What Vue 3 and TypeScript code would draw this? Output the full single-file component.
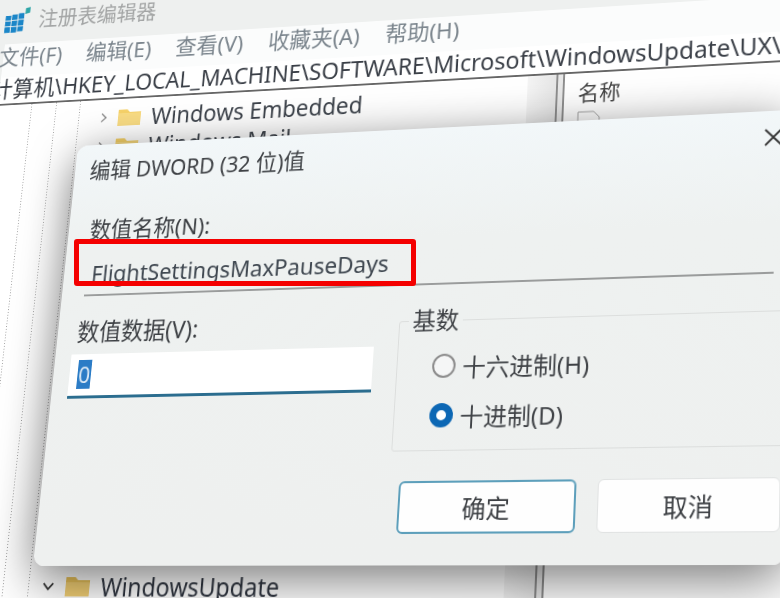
<script setup lang="ts">
import { computed } from 'vue'

type Pt = [number, number]
// Dialog rectangle in the scene's own coordinates, and where the camera shows its corners.
const rect = { x: 100, y: 210, w: 760, h: 440 }
const quad: Pt[] = [[78, 146], [790, 110], [785, 565], [33, 566]]

const cameraMatrix = computed(() => {
  const [[x0, y0], [x1, y1], [x2, y2], [x3, y3]] = quad
  const sx = x0 - x1 + x2 - x3
  const sy = y0 - y1 + y2 - y3
  const dx1 = x1 - x2, dx2 = x3 - x2, dy1 = y1 - y2, dy2 = y3 - y2
  const den = dx1 * dy2 - dx2 * dy1
  const g = (sx * dy2 - dx2 * sy) / den
  const h = (dx1 * sy - sx * dy1) / den
  const a = x1 - x0 + g * x1, b = x3 - x0 + h * x3
  const d = y1 - y0 + g * y1, e = y3 - y0 + h * y3
  const ax = a / rect.w, bx = b / rect.h
  const dx = d / rect.w, ex = e / rect.h
  const gx = g / rect.w, hx = h / rect.h
  const cx = x0 - ax * rect.x - bx * rect.y
  const fx = y0 - dx * rect.x - ex * rect.y
  const ix = 1 - gx * rect.x - hx * rect.y
  return `matrix3d(${[ax, dx, 0, gx, bx, ex, 0, hx, 0, 0, 1, 0, cx, fx, 0, ix].join(',')})`
})

const menus = ['文件(F)', '编辑(E)', '查看(V)', '收藏夹(A)', '帮助(H)']
</script>

<template>
  <div class="view">
    <div class="scene" :style="{ transform: cameraMatrix }">
      <header class="titlebar">
        <svg class="appicon" viewBox="0 0 30 28" width="33" height="31">
          <g fill="#1b86c8">
            <rect x="2" y="9" width="6" height="5" /><rect x="9" y="8" width="6" height="5.500" /><rect x="16" y="7" width="6" height="6" />
            <rect x="2" y="15" width="6" height="5" /><rect x="9" y="14.500" width="6" height="5.500" /><rect x="16" y="14" width="6" height="6" />
            <rect x="2" y="21" width="6" height="6" /><rect x="9" y="21" width="6" height="6" /><rect x="16" y="21" width="6" height="5" />
          </g>
          <path d="M23 2l5-1v6l-5 1z" fill="#2fa6a8" />
        </svg>
        <span class="apptitle">注册表编辑器</span>
      </header>
      <nav class="menubar">
        <span v-for="m in menus" :key="m" class="menu">{{ m }}</span>
      </nav>
      <div class="address">计算机\HKEY_LOCAL_MACHINE\SOFTWARE\Microsoft\WindowsUpdate\UX\Settings</div>
      <main class="panes">
        <section class="tree">
          <div class="row">
            <svg class="chev" viewBox="0 0 12 12" width="12" height="12"><path d="M4 1.500l5 4.500-5 4.500" fill="none" stroke="#8a8a8a" stroke-width="1.500" /></svg>
            <svg class="folder" viewBox="0 0 26 20" width="26" height="20"><path d="M0 2h10l3 3h13v15H0z" fill="#f6d269" /><path d="M0 6h26v14H0z" fill="#f9dc84" /></svg>
            <span>Windows Embedded</span>
          </div>
          <div class="row">
            <svg class="chev" viewBox="0 0 12 12" width="12" height="12"><path d="M4 1.500l5 4.500-5 4.500" fill="none" stroke="#8a8a8a" stroke-width="1.500" /></svg>
            <svg class="folder" viewBox="0 0 26 20" width="26" height="20"><path d="M0 2h10l3 3h13v15H0z" fill="#f6d269" /><path d="M0 6h26v14H0z" fill="#f9dc84" /></svg>
            <span>Windows Mail</span>
          </div>
          <div class="row last">
            <svg class="chev" viewBox="0 0 12 12" width="14" height="14"><path d="M1.500 3.500l4.500 5 4.500-5" fill="none" stroke="#333" stroke-width="1.500" /></svg>
            <svg class="folder" viewBox="0 0 26 20" width="26" height="20"><path d="M0 1h10l3 3h13v16H0z" fill="#e9c25a" /><path d="M0 6h26v14H0z" fill="#f2cf74" /></svg>
            <span>WindowsUpdate</span>
          </div>
        </section>
        <div class="scrollband"></div>
        <div class="splitter"></div>
        <section class="list">
          <div class="listhead">名称</div>
          <svg viewBox="0 0 26 22" width="26" height="22" class="fileicon"><path d="M1 3h16l6 6v13H1z" fill="#fff" stroke="#a5a5a5" /></svg>
        </section>
      </main>

      <form class="dialog" @submit.prevent>
        <div class="dlghead">
          <span>编辑 DWORD (32 位)值</span>
          <svg viewBox="0 0 20 20" width="20" height="20"><path d="M2 2l16 16M18 2L2 18" stroke="#333" stroke-width="1.800" /></svg>
        </div>
        <div class="label namelabel">数值名称(N):</div>
        <div class="nameinput">FlightSettingsMaxPauseDays</div>
        <div class="columns">
          <div class="datacol">
            <div class="label">数值数据(V):</div>
            <div class="datainput"><span class="sel">0</span></div>
          </div>
          <fieldset class="base">
            <legend>基数</legend>
            <div class="radios">
              <div class="radio"><i class="dot"></i>十六进制(H)</div>
              <div class="radio"><i class="dot on"></i>十进制(D)</div>
            </div>
          </fieldset>
        </div>
        <div class="actions">
          <button type="button" class="btn primary">确定</button>
          <button type="button" class="btn cancel">取消</button>
        </div>
      </form>
    </div>
    <div class="redbox"></div>
  </div>
</template>

<style>
body { margin: 0; }
</style>

<style scoped>
.view {
  position: relative;
  width: 780px;
  height: 598px;
  overflow: hidden;
  background: #eef0ef;
  font-family: "Noto Sans", "Noto Sans CJK SC", sans-serif;
}
.scene {
  width: 1000px;
  height: 800px;
  display: flex;
  flex-direction: column;
  transform-origin: 0 0;
  background: #eef0ef;
  filter: blur(0.7px);
}
.titlebar {
  height: 90px;
  display: flex;
  align-items: flex-end;
  gap: 8px;
  padding: 0 0 13px 0;
  box-sizing: border-box;
}
.appicon { margin-left: -5px; margin-bottom: -1px; }
.apptitle { font-size: 23px; line-height: 30px; color: #a2a4a4; margin-left: 1px; }
.menubar {
  height: 38px;
  box-sizing: border-box;
  padding-bottom: 12px;
  display: flex;
  gap: 28px;
  background: #fbfcfc;
  align-items: center;
  font-size: 24px;
  color: #7b858d;
}
.menu:first-child { margin-left: -5px; }
.address {
  height: 30px;
  line-height: 28px;
  background: #fff;
  font-size: 24.700px;
  color: #3a3f47;
  white-space: nowrap;
  text-indent: -9px;
  border-bottom: 2px solid #666;
}
.panes { flex: 1; display: flex; background: #fff; }
.tree {
  width: 592px;
  flex: none;
  padding: 0 0 0 120px;
  box-sizing: border-box;
  background-image:
    repeating-linear-gradient(#9a9a9a 0 1px, transparent 1px 3px),
    repeating-linear-gradient(#9a9a9a 0 1px, transparent 1px 3px),
    repeating-linear-gradient(#9a9a9a 0 1px, transparent 1px 3px);
  background-size: 1px 100%;
  background-position: 40px 0, 69px 0, 97px 0;
  background-repeat: no-repeat;
}
.row {
  height: 32px;
  display: flex;
  align-items: center;
  font-size: 24.500px;
  color: #3e444c;
  white-space: nowrap;
}
.row:first-child { margin-top: 4px; }
.row.last { margin-top: 426px; color: #2f3540; }
.chev { margin-right: 11px; flex: none; }
.folder { margin-right: 12px; flex: none; }
.row.last .chev { margin: 0 12px 0 -8px; }
.scrollband { width: 30px; flex: none; background: linear-gradient(90deg, #f4f4f4, #e6e6e6); }
.splitter {
  width: 9px;
  flex: none;
  box-sizing: border-box;
  border-left: 2px solid #8e8e8e;
  border-right: 2px solid #8e8e8e;
  background: #e8e8e8;
}
.list { flex: 1; padding: 4px 0 0 14px; display: flex; flex-direction: column; }
.listhead { font-size: 22px; line-height: 32px; color: #444; }
.fileicon { margin-top: 2px; }

.dialog {
  position: absolute;
  left: 100px;
  top: 210px;
  width: 760px;
  height: 440px;
  box-sizing: border-box;
  border-radius: 12px;
  background: linear-gradient(180deg, #f2f7f9 0, #eef1f0 26%, #eef0ef 100%);
  box-shadow: 0 12px 50px rgba(0, 0, 0, 0.55);
  font-size: 24px;
  color: #3c3f43;
}
.dlghead {
  height: 54px;
  padding: 0 6px 0 17px;
  display: flex;
  align-items: center;
  justify-content: space-between;
  font-size: 23.400px;
  color: #3f4246;
}
.label { line-height: 28px; }
.namelabel { margin: 25px 0 0 24px; }
.nameinput {
  margin: 13px 14px 0 25px;
  height: 42px;
  padding: 0 0 0 6px;
  line-height: 40px;
  font-size: 24px;
  color: #3f4750;
  border-bottom: 2px solid #9a9c9c;
  white-space: nowrap;
}
.columns {
  display: flex;
  margin-top: 22px;
  padding-left: 18px;
}
.datacol { width: 328px; flex: none; }
.datacol .label { padding-left: 4px; margin-top: 2px; font-size: 24.500px; }
.datainput {
  margin-top: 9px;
  height: 46px;
  box-sizing: border-box;
  padding: 6px 0 0 9px;
  background: #fff;
  border-bottom: 3px solid #2b6d8f;
}
.sel {
  display: block;
  width: 15px;
  height: 30px;
  line-height: 30px;
  background: #2b7cc6;
  color: #dbe9f5;
  font-size: 23px;
  text-align: center;
}
.base {
  margin: 0 0 0 25px;
  padding: 0 0 0 36px;
  width: 400px;
  height: 144px;
  box-sizing: border-box;
  border: 1px solid #dcdedd;
  border-radius: 3px;
  min-width: 0;
}
.base legend { padding: 0 4px; margin-left: -27px; line-height: 28px; font-size: 24px; color: #3e4145; }
.radios { display: flex; flex-direction: column; gap: 17px; margin-top: 16px; }
.radio {
  display: flex;
  align-items: center;
  gap: 7px;
  height: 32px;
  font-size: 24px;
  color: #3f4246;
}
.dot {
  width: 24px;
  height: 24px;
  box-sizing: border-box;
  border-radius: 50%;
  border: 2px solid #8c8c8c;
  background: #f5f6f6;
}
.dot.on { border: 7px solid #0c67b4; background: #fff; }
.actions {
  display: flex;
  justify-content: flex-end;
  gap: 21px;
  margin-top: 29px;
  padding-right: 5px;
}
.btn {
  width: 180px;
  height: 51px;
  box-sizing: border-box;
  font: inherit;
  font-size: 24px;
  color: #3b3e42;
  background: #fefefe;
  border: 1px solid #e1e3e3;
  border-radius: 6px;
}
.btn.cancel { width: 175px; }
.btn.primary { width: 178px; border: 2px solid #5d9fbb; }
.redbox {
  position: absolute;
  left: 74px;
  top: 239px;
  width: 342px;
  height: 47px;
  box-sizing: border-box;
  border: 5px solid #f40000;
  border-radius: 3px;
}
</style>
